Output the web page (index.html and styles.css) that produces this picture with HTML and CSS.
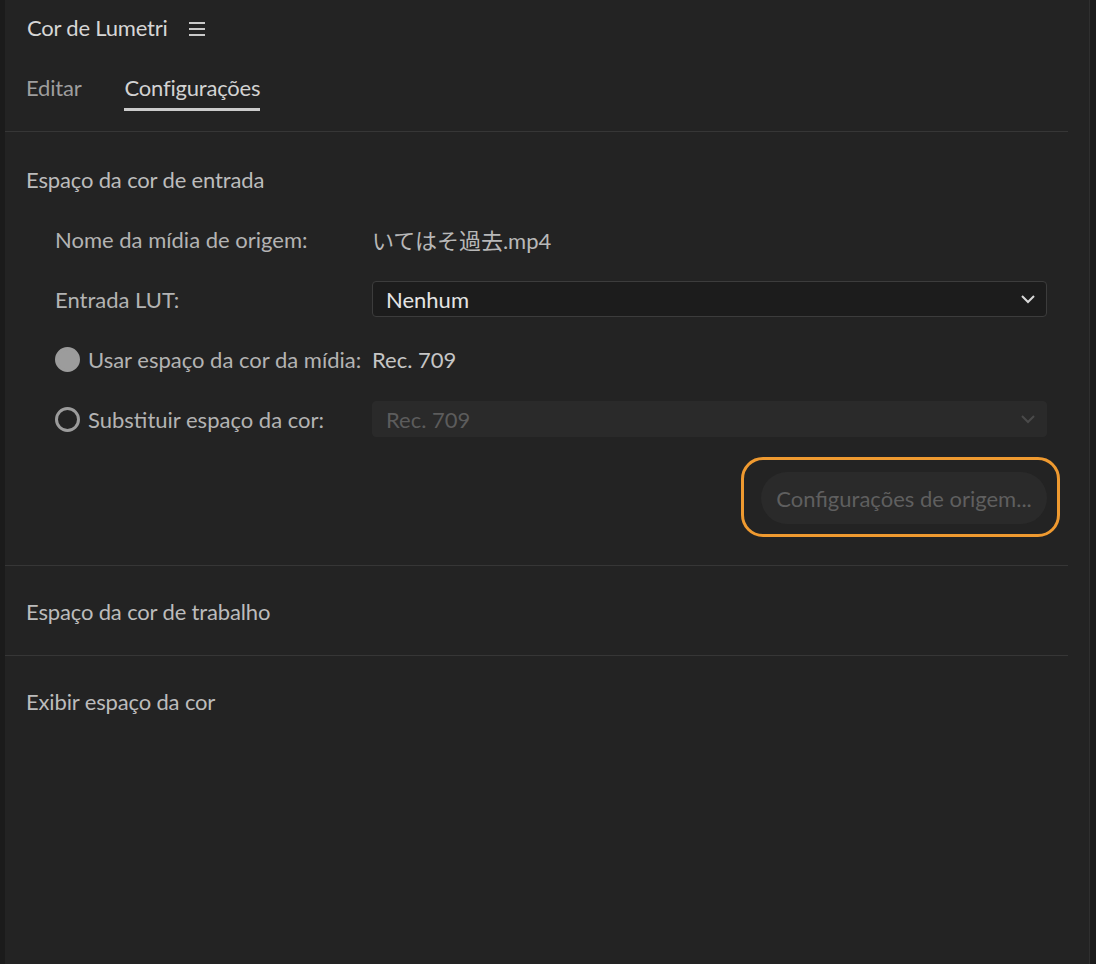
FILE: index.html
```html
<!DOCTYPE html>
<html lang="pt">
<head>
<meta charset="utf-8">
<title>Cor de Lumetri</title>
<link rel="stylesheet" href="styles.css">
</head>
<body>
<div class="panel">
  <header class="title-row">
    <span class="title">Cor de Lumetri</span>
    <svg class="menu-icon" width="18" height="16" viewBox="0 0 18 16" aria-hidden="true">
      <path d="M1 2h16M1 8h16M1 14h16" stroke="#c9c9c9" stroke-width="2" fill="none"/>
    </svg>
  </header>
  <nav class="tabs">
    <span class="tab">Editar</span>
    <span class="tab active">Configurações</span>
  </nav>

  <section class="section first">
    <h2 class="section-title">Espaço da cor de entrada</h2>
    <div class="rows">
      <div class="row">
        <span class="label">Nome da mídia de origem:</span>
        <span class="value">いてはそ過去.mp4</span>
      </div>
      <div class="row">
        <span class="label">Entrada LUT:</span>
        <div class="select">
          <span>Nenhum</span>
          <svg class="chev" width="16" height="10" viewBox="0 0 16 10" aria-hidden="true"><path d="M2 2l6 6 6-6" stroke="#d8d8d8" stroke-width="2" fill="none"/></svg>
        </div>
      </div>
      <div class="row">
        <span class="label radio-label"><span class="radio checked"></span>Usar espaço da cor da mídia:</span>
        <span class="value strong">Rec. 709</span>
      </div>
      <div class="row">
        <span class="label radio-label"><span class="radio"></span>Substituir espaço da cor:</span>
        <div class="select disabled">
          <span>Rec. 709</span>
          <svg class="chev" width="16" height="10" viewBox="0 0 16 10" aria-hidden="true"><path d="M2 2l6 6 6-6" stroke="#4a4a4a" stroke-width="2" fill="none"/></svg>
        </div>
      </div>
      <div class="button-row">
        <div class="highlight">
          <button class="pill" type="button">Configurações de origem...</button>
        </div>
      </div>
    </div>
  </section>

  <section class="section collapsed">
    <h2 class="section-title">Espaço da cor de trabalho</h2>
  </section>
  <section class="section collapsed">
    <h2 class="section-title">Exibir espaço da cor</h2>
  </section>
</div>
</body>
</html>
```

FILE: styles.css
```css
html, body {
  margin: 0;
  padding: 0;
  background: #1b1b1b;
}

body {
  font-family: Lato, "Noto Sans CJK JP", sans-serif;
  font-size: 22px;
  color: #b5b5b5;
}

.panel {
  margin-left: 5px;
  width: 1085px;
  height: 964px;
  background: #232323;
  border-right: 1px solid #2f2f2f;
  box-sizing: border-box;
  padding-right: 21px;
  display: flex;
  flex-direction: column;
}

.title-row {
  height: 56px;
  display: flex;
  align-items: center;
  padding-left: 22px;
  gap: 20px;
}

.title {
  color: #d6d6d6;
  font-size: 22px;
  letter-spacing: -0.2px;
  line-height: 30px;
}

.menu-icon {
  display: block;
  margin-top: 1px;
}

.tabs {
  display: flex;
  gap: 43px;
  padding-left: 21px;
  padding-top: 17px;
  padding-bottom: 20px;
  border-bottom: 1px solid #363636;
}

.tab {
  line-height: 30px;
  font-size: 22px;
  letter-spacing: -0.2px;
  color: #9e9e9e;
  padding-bottom: 5px;
  border-bottom: 3px solid transparent;
}

.tab.active {
  color: #d2d2d2;
  border-bottom-color: #cbcbcb;
}

.section {
  padding-left: 21px;
}

.section.first {
  padding-top: 33px;
  height: 434px;
  box-sizing: border-box;
  border-bottom: 1px solid #363636;
}

.section.collapsed {
  height: 90px;
  box-sizing: border-box;
  padding-top: 31px;
  border-bottom: 1px solid #363636;
}

.section.collapsed:last-child {
  border-bottom: none;
}

.section-title {
  margin: 0;
  font-size: 22px;
  letter-spacing: -0.15px;
  font-weight: normal;
  line-height: 30px;
  color: #bcbcbc;
}

.rows {
  margin-top: 14px;
  padding-left: 29px;
  padding-right: 21px;
  display: flex;
  flex-direction: column;
}

.row {
  display: grid;
  grid-template-columns: 317px 1fr;
  align-items: center;
  height: 60px;
}

.label {
  color: #b3b3b3;
  white-space: nowrap;
}

.value {
  color: #b8b8b8;
}

.value.strong {
  color: #c6c6c6;
}

.radio-label {
  display: flex;
  align-items: center;
  gap: 8px;
}

.radio {
  width: 25px;
  height: 25px;
  border-radius: 50%;
  box-sizing: border-box;
  border: 3px solid #9c9c9c;
  flex: none;
}

.radio.checked {
  background: #9c9c9c;
}

.select {
  height: 36px;
  box-sizing: border-box;
  display: flex;
  align-items: center;
  justify-content: space-between;
  padding: 0 10px 0 13px;
  background: #1c1c1c;
  border: 1px solid #3c3c3c;
  border-radius: 4px;
  color: #e4e4e4;
}

.select.disabled {
  background: #2a2a2a;
  border-color: #2a2a2a;
  color: #5c5c5c;
}

.chev {
  display: block;
}

.button-row {
  display: flex;
  justify-content: flex-end;
  margin-right: -13px;
  margin-top: 8px;
}

.highlight {
  border: 3px solid #ef9a30;
  border-radius: 22px;
  padding: 12px 10px 10px 17px;
}

.pill {
  display: block;
  width: 286px;
  height: 52px;
  border: none;
  border-radius: 26px;
  background: #2a2a2a;
  color: #5f5f5f;
  font-family: Lato, "Noto Sans CJK JP", sans-serif;
  font-size: 22px;
  padding: 0;
  text-align: center;
}
```
